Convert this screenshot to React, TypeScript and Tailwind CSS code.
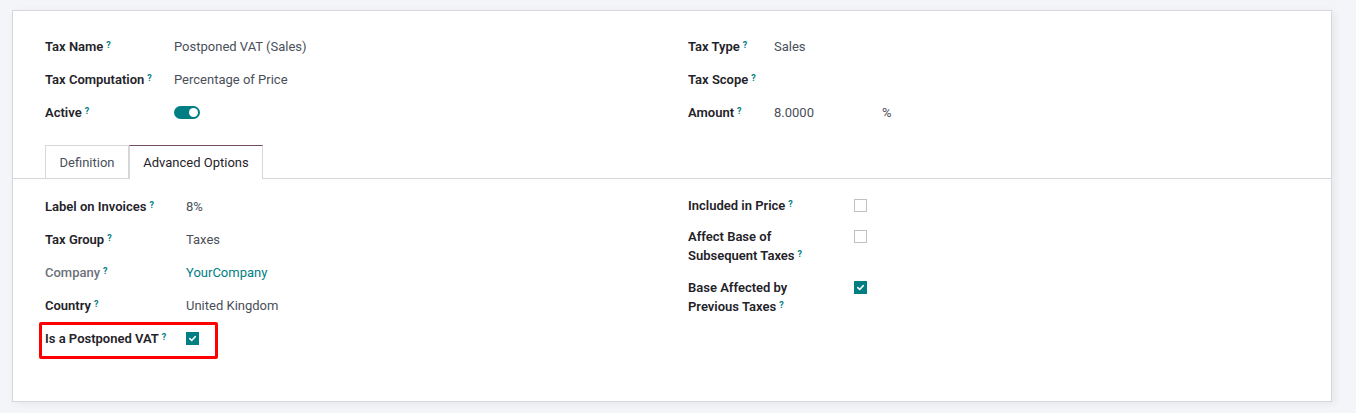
import React from "react";

const font = { fontFamily: "Roboto, 'Noto Sans', sans-serif" };

function Help() {
  return <sup className="ml-[3px] text-[9px] font-bold text-[#017e84] relative -top-[3px]">?</sup>;
}

function Label({ children, muted }: { children: React.ReactNode; muted?: boolean }) {
  return (
    <span className={muted ? "text-[#6c717a] font-medium" : "text-[#1f2329] font-semibold"}>
      {children}
      <Help />
    </span>
  );
}

function Check({ on }: { on?: boolean }) {
  if (!on) return <span className="block w-[13px] h-[13px] border border-[#bfc1c4] bg-white" />;
  return (
    <span className="flex w-[13px] h-[13px] items-center justify-center bg-[#017e84]">
      <svg width="9" height="9" viewBox="0 0 10 10">
        <path d="M2 5.2 L4.1 7.2 L8 3" stroke="white" strokeWidth="1.8" fill="none" strokeLinecap="round" strokeLinejoin="round" />
      </svg>
    </span>
  );
}

function Row({ label, muted, labelW, children }: { label: string; muted?: boolean; labelW: string; children?: React.ReactNode }) {
  return (
    <div className="flex items-center h-[33px]">
      <div className={labelW}>
        <Label muted={muted}>{label}</Label>
      </div>
      <div className="text-[#4a4f59]">{children}</div>
    </div>
  );
}

export default function App() {
  return (
    <div className="w-[1356px] h-[413px] bg-[#f4f5f8] pt-[10px] pl-[12px] text-[13px] leading-[19px]" style={font}>
      <div className="w-[1320px] h-[392px] bg-white border border-[#d5d7db] shadow-[3px_2px_8px_rgba(0,0,0,0.06)]">
        <div className="flex pl-[32px] pt-[19px]">
          <div className="w-[643px]">
            <Row label="Tax Name" labelW="w-[129px]">Postponed VAT (Sales)</Row>
            <Row label="Tax Computation" labelW="w-[129px]">Percentage of Price</Row>
            <Row label="Active" labelW="w-[129px]">
              <span className="flex items-center justify-end w-[26px] h-[13px] rounded-full bg-[#017e84] pr-[2px]">
                <span className="block w-[9px] h-[9px] rounded-full bg-white" />
              </span>
            </Row>
          </div>
          <div className="flex-1">
            <Row label="Tax Type" labelW="w-[86px]">Sales</Row>
            <Row label="Tax Scope" labelW="w-[86px]" />
            <Row label="Amount" labelW="w-[86px]">
              <span className="inline-block w-[108px]">8.0000</span>
              <span>%</span>
            </Row>
          </div>
        </div>

        <div className="flex pl-[32px] mt-[16px] border-b border-[#d5d7db]">
          <div className="w-[84px] h-[33px] flex items-center justify-center border border-b-0 border-[#d5d7db] text-[#4a4f59]">Definition</div>
          <div className="w-[134px] h-[34px] -mb-px flex items-center justify-center border border-b-0 border-[#d5d7db] border-t-[#714b67] bg-white text-[#1f2329]">
            Advanced Options
          </div>
        </div>

        <div className="flex pl-[32px] pt-[11px]">
          <div className="w-[643px]">
            <Row label="Label on Invoices" labelW="w-[141px]">8%</Row>
            <Row label="Tax Group" labelW="w-[141px]">Taxes</Row>
            <Row label="Company" muted labelW="w-[141px]">
              <span className="text-[#017e84]">YourCompany</span>
            </Row>
            <Row label="Country" labelW="w-[141px]">United Kingdom</Row>
            <div className="relative">
              <Row label="Is a Postponed VAT" labelW="w-[141px]">
                <Check on />
              </Row>
              <div className="absolute left-[-6px] top-0 w-[179px] h-[37px] border-[3px] border-[#ff0000] rounded-[2px]" />
            </div>
          </div>
          <div className="flex-1">
            <div className="flex items-start py-[6px]">
              <div className="w-[166px]"><Label>Included in Price</Label></div>
              <div className="pt-[3px]"><Check /></div>
            </div>
            <div className="flex items-start py-[6px]">
              <div className="w-[166px]">
                <Label>
                  Affect Base of
                  <br />
                  Subsequent Taxes
                </Label>
              </div>
              <div className="pt-[3px]"><Check /></div>
            </div>
            <div className="flex items-start pt-[7px] pb-[6px]">
              <div className="w-[166px]">
                <Label>
                  Base Affected by
                  <br />
                  Previous Taxes
                </Label>
              </div>
              <div className="pt-[3px]"><Check on /></div>
            </div>
          </div>
        </div>
      </div>
    </div>
  );
}
